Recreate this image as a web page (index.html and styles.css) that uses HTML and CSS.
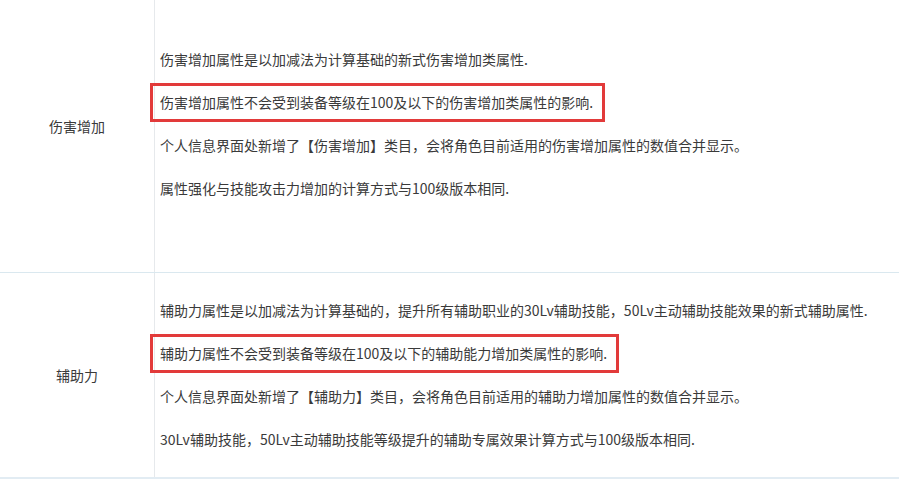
FILE: index.html
```html
<!DOCTYPE html>
<html>
<head>
    <title>属性说明</title>
    <link rel="stylesheet" href="styles.css">
</head>
<body>
    <table class="attr-table">
        <tr class="first-row">
            <td class="attr-name">伤害增加</td>
            <td class="attr-desc">
                <p>伤害增加属性是以加减法为计算基础的新式伤害增加类属性.</p>
                <p><span class="mark">伤害增加属性不会受到装备等级在100及以下的伤害增加类属性的影响.</span></p>
                <p>个人信息界面处新增了【伤害增加】类目，会将角色目前适用的伤害增加属性的数值合并显示。</p>
                <p>属性强化与技能攻击力增加的计算方式与100级版本相同.</p>
            </td>
        </tr>
        <tr class="last-row">
            <td class="attr-name">辅助力</td>
            <td class="attr-desc">
                <p>辅助力属性是以加减法为计算基础的，提升所有辅助职业的30Lv辅助技能，50Lv主动辅助技能效果的新式辅助属性.</p>
                <p><span class="mark">辅助力属性不会受到装备等级在100及以下的辅助能力增加类属性的影响.</span></p>
                <p>个人信息界面处新增了【辅助力】类目，会将角色目前适用的辅助力增加属性的数值合并显示。</p>
                <p>30Lv辅助技能，50Lv主动辅助技能等级提升的辅助专属效果计算方式与100级版本相同.</p>
            </td>
        </tr>
    </table>
</body>
</html>
```

FILE: styles.css
```css
body {
    margin: 0;
    font-family: "Noto Sans CJK SC", "Liberation Sans", sans-serif;
    font-size: 14px;
    color: #3a3a3a;
    background: #fff;
    overflow: hidden;
}
.attr-table {
    width: 899px;
    margin-top: -20px;
    border-collapse: collapse;
}
.attr-table td {
    vertical-align: middle;
}
.attr-name {
    width: 154px;
    padding: 0;
    text-align: center;
    border-right: 1px solid #e6e9ec;
}
.attr-desc {
    padding: 26px 0 27px 5px;
}
.first-row td {
    border-bottom: 1px solid #dae8ef;
}
.first-row .attr-desc {
    padding-top: 68px;
    padding-bottom: 73px;
}
.last-row td {
    border-bottom: 2px solid #e2ecf3;
}
.attr-desc p {
    margin: 0 0 21px;
    line-height: 22px;
    white-space: nowrap;
}
.attr-desc p:last-child {
    margin-bottom: 0;
}
.mark {
    position: relative;
}
/* red annotation frame drawn over the line */
.mark::after {
    content: "";
    position: absolute;
    left: -10px;
    right: -12px;
    top: -9px;
    bottom: -10px;
    border: 3px solid #e23a3a;
}
```
